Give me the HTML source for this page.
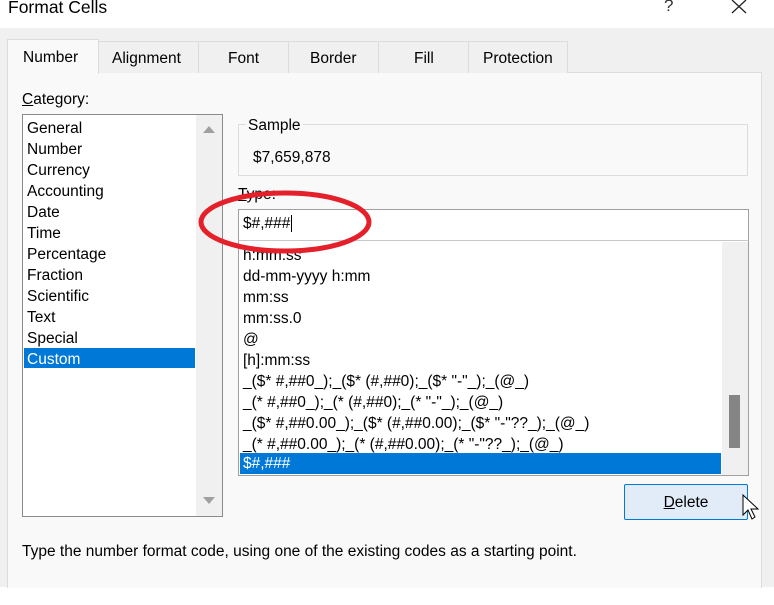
<!DOCTYPE html><html><head><style>
*{margin:0;padding:0;box-sizing:border-box}
body{width:774px;height:605px;position:relative;background:#fff;font-family:"Liberation Sans",sans-serif;font-size:15.5px;color:#000;overflow:hidden}
.a{position:absolute}
.t{white-space:nowrap}
</style></head><body>
<div class="a t" style="left:8px;top:-3px;font-size:17.5px">Format Cells</div>
<div class="a t" style="left:664px;top:-4px;font-size:17px;color:#333">?</div>
<svg class="a" style="left:730px;top:0" width="18" height="14"><path d="M2 0L16 13M16 0L2 13" stroke="#222" stroke-width="1.3"/></svg>
<div class="a" style="left:0;top:28px;width:774px;height:559px;background:#f0f0f0"></div>
<div class="a" style="left:7px;top:72px;width:755px;height:516px;background:#f9f9f9;border:1px solid #dcdcdc;border-bottom:none"></div>
<div class="a" style="left:98px;top:41px;width:470px;height:32px;background:#f0f0f0"></div>
<div class="a" style="left:98px;top:41px;width:101px;height:32px;border:1px solid #dcdcdc;border-bottom:none;border-left:none"></div>
<div class="a" style="left:199px;top:41px;width:90px;height:32px;border-right:1px solid #dcdcdc;border-top:1px solid #dcdcdc"></div>
<div class="a" style="left:289px;top:41px;width:90px;height:32px;border-right:1px solid #dcdcdc;border-top:1px solid #dcdcdc"></div>
<div class="a" style="left:379px;top:41px;width:90px;height:32px;border-right:1px solid #dcdcdc;border-top:1px solid #dcdcdc"></div>
<div class="a" style="left:469px;top:41px;width:99px;height:32px;border-right:1px solid #dcdcdc;border-top:1px solid #dcdcdc"></div>
<div class="a" style="left:7px;top:39px;width:92px;height:35px;background:#f9f9f9;border:1px solid #dcdcdc;border-bottom:none"></div>
<div class="a t" style="left:23px;top:49px">Number</div>
<div class="a t" style="left:112px;top:50px">Alignment</div>
<div class="a t" style="left:228px;top:50px">Font</div>
<div class="a t" style="left:310px;top:50px">Border</div>
<div class="a t" style="left:414px;top:50px">Fill</div>
<div class="a t" style="left:483px;top:50px">Protection</div>
<div class="a t" style="left:22px;top:91px"><u>C</u>ategory:</div>
<div class="a" style="left:22px;top:114px;width:201px;height:403px;background:#fff;border:1px solid #8a8a8a"></div>
<div class="a" style="left:196px;top:115px;width:26px;height:401px;background:#f0f0f0"></div>
<svg class="a" style="left:202px;top:124px" width="14" height="10"><path d="M1 9L7 2L13 9Z" fill="#a0a0a0"/></svg>
<svg class="a" style="left:202px;top:496px" width="14" height="10"><path d="M1 1L7 8L13 1Z" fill="#a0a0a0"/></svg>
<div class="a" style="left:24px;top:348px;width:171px;height:20px;background:#0078d7"></div>
<div class="a" style="left:27px;top:118px;line-height:21px">General<br>Number<br>Currency<br>Accounting<br>Date<br>Time<br>Percentage<br>Fraction<br>Scientific<br>Text<br>Special<br><span style="color:#fff">Custom</span></div>
<div class="a" style="left:238px;top:124px;width:510px;height:52px;border:1px solid #dcdcdc"></div>
<div class="a t" style="left:246px;top:117px;background:#f9f9f9;padding:0 2px">Sample</div>
<div class="a t" style="left:253px;top:149px">$7,659,878</div>
<div class="a t" style="left:238px;top:186px"><u>T</u>ype:</div>
<div class="a" style="left:238px;top:209px;width:511px;height:32px;background:#fff;border:1px solid #a0a0a0"></div>
<div class="a t" style="left:243px;top:215px">$#,###<span style="border-left:1px solid #000;margin-left:1px"></span></div>
<div class="a" style="left:238px;top:240px;width:511px;height:236px;background:#fff;border:1px solid #a0a0a0;border-top-color:#c8c8c8;overflow:hidden">
<div class="a t" style="left:4px;top:4px;line-height:21px">h:mm:ss<br>dd-mm-yyyy h:mm<br>mm:ss<br>mm:ss.0<br>@<br>[h]:mm:ss<br>_($* #,##0_);_($* (#,##0);_($* "-"_);_(@_)<br>_(* #,##0_);_(* (#,##0);_(* "-"_);_(@_)<br>_($* #,##0.00_);_($* (#,##0.00);_($* "-"??_);_(@_)<br>_(* #,##0.00_);_(* (#,##0.00);_(* "-"??_);_(@_)</div>
</div>
<div class="a" style="left:722px;top:242px;width:26px;height:233px;background:#f0f0f0"></div>
<div class="a" style="left:729px;top:395px;width:11px;height:53px;background:#858585"></div>
<div class="a" style="left:240px;top:453px;width:481px;height:21px;background:#0078d7"></div>
<div class="a t" style="left:243px;top:455px;color:#fff">$#,###</div>
<div class="a" style="left:624px;top:484px;width:124px;height:36px;background:#e1ecf8;border:1px solid #0078d7;border-radius:2px;text-align:center;line-height:35px"><u>D</u>elete</div>
<svg class="a" style="left:742px;top:494px" width="22" height="30"><path d="M1 1L1 21L6 16L10 25L13 23L9 15L16 15Z" fill="#fff" stroke="#000" stroke-width="1"/></svg>
<div class="a t" style="left:22px;top:543px">Type the number format code, using one of the existing codes as a starting point.</div>
<svg class="a" style="left:0;top:0" width="774" height="605"><ellipse cx="285" cy="222" rx="84" ry="29" fill="none" stroke="#e4202a" stroke-width="5"/></svg>
</body></html>
